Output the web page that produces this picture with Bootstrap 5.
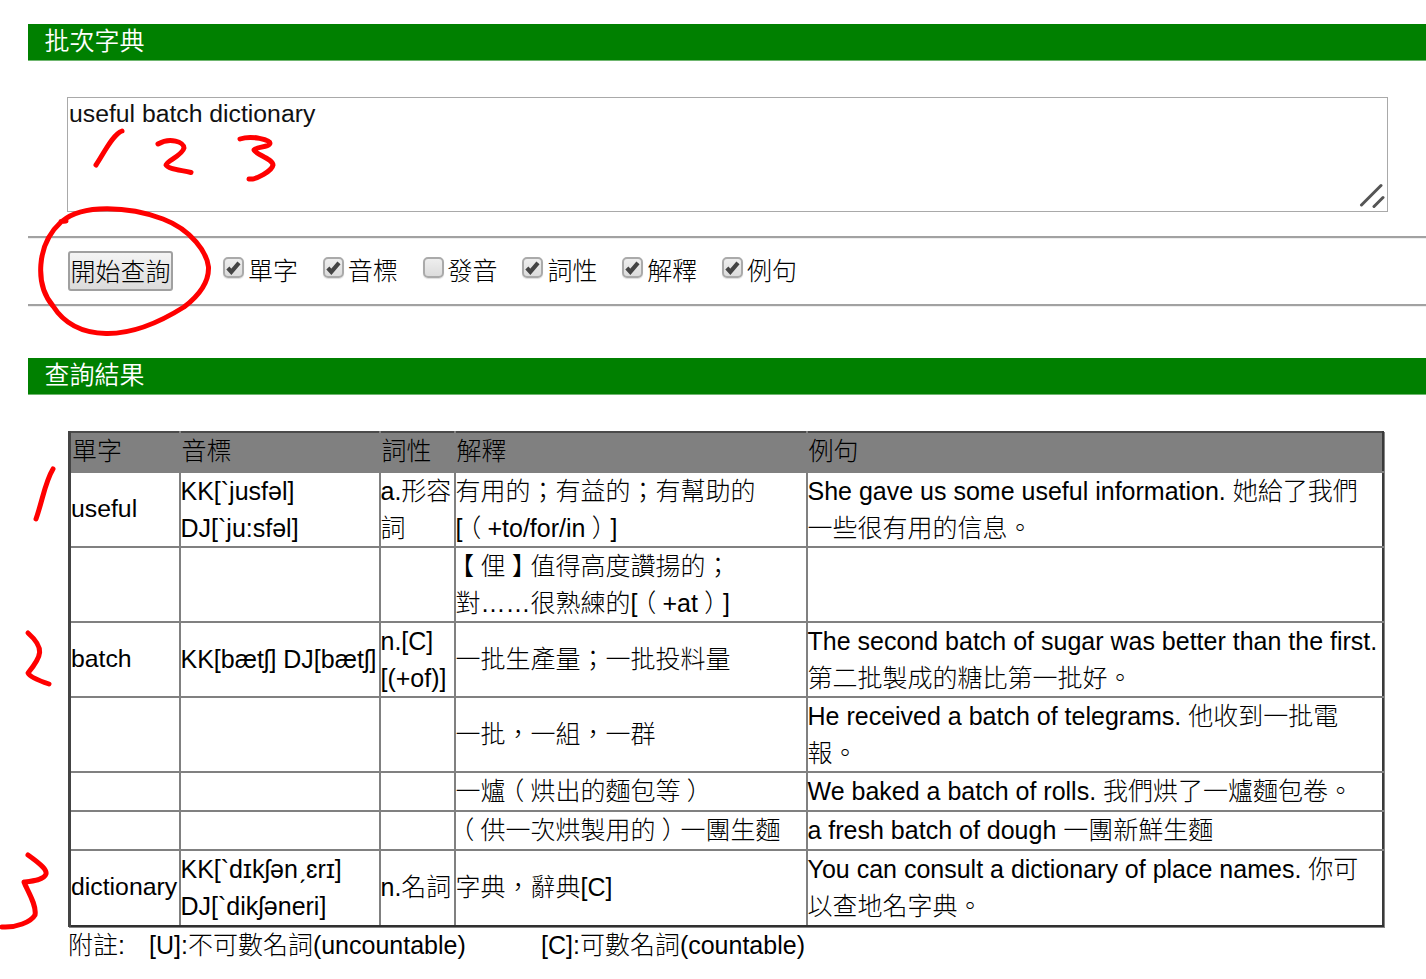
<!DOCTYPE html>
<html lang="zh-Hant">
<head>
<meta charset="utf-8">
<meta name="viewport" content="width=device-width, initial-scale=1">
<title>批次字典</title>
<link href="https://cdn.jsdelivr.net/npm/bootstrap@5.3.0/dist/css/bootstrap.min.css" rel="stylesheet">
<style>
  body { font: 300 25px/37px "Liberation Sans", "Noto Sans CJK TC", sans-serif; color: #000; background: #fff; overflow: hidden; }
  .page-wrap { padding: 24px 0 0 28px; min-height: 979px; }
  .title-bar { background: #008000; color: #fff; height: 36px; line-height: 34px; padding-left: 16.5px; font-size: 25px; font-weight: 350; margin: 0; box-shadow: 0 1px #6fb66f; }
  .query-area { margin: 37px 38px 24px 39px; height: 115px; border: 1px solid #a9a9a9; }
  .query-text { width: 100%; height: 100%; border: 0; padding: 1px 1px; resize: none; outline: 0; font: 24.75px/29px "Liberation Sans", sans-serif; color: #111; display: block; overflow: hidden; }
  .grip { right: 2px; bottom: 1px; }
  .tool-row { height: 70px; border-top: 2px solid #a2a2a2; border-bottom: 2px solid #a2a2a2; box-shadow: 0 1px #eee, inset 0 1px #eee; padding-left: 39.5px; }
  .query-btn { width: 105px; height: 40px; border: 2px solid #a0a0a0; border-radius: 3px; background: linear-gradient(#f4f4f4, #dcdcdc); padding: 0 0 0 1px; font: inherit; line-height: 38px; white-space: nowrap; color: #000; }
  .checks { margin-left: 50.5px; gap: 24.8px; }
  .check-item { gap: 4px; width: 75px; white-space: nowrap; }
  .check-item input { appearance: none; flex: none; width: 21px; height: 21px; margin: -8px 0 0; border: 2px solid #aaa; border-radius: 5px; background: linear-gradient(#eee, #dcdcdc); box-shadow: 0 1px 1px #ddd; }
  .check-item input:checked { background: url("data:image/svg+xml,%3Csvg xmlns='http://www.w3.org/2000/svg' viewBox='0 0 18 18'%3E%3Cpath d='M3 9.500l3.700 4L14.800 4' fill='none' stroke='%23444' stroke-width='4.400'/%3E%3C/svg%3E") center/17px no-repeat, linear-gradient(#eee, #dcdcdc); }
  .second-bar { margin-top: 52px; }
  .result-table { width: 1316px; margin: 37px 0 0 40px; table-layout: fixed; border-collapse: collapse; border: 2px solid #303030; border-left: 3px solid #444; box-shadow: 1px 1px #858585; white-space: nowrap; }
  .result-table td, .result-table th { border: 2px solid #808080; padding: 0; vertical-align: middle; font-weight: 300; font-size: 25px; line-height: 36.5px; }
  .result-table thead th { background: #808080; padding: 0 0 1px 1px; line-height: 35px; border-top-color: #4a4a4a; }
  .result-table tr > :last-child { border-right-color: #3a3a3a; }
  .result-table tr:last-child td { border-bottom-color: #303030; }
  .result-table td:first-child { font-size: 24.8px; }
  /* full-width brackets, centred in their cell */
  .fw { display: inline-block; width: 25px; text-align: center; font-feature-settings: "halt"; }
  .notes { margin: 0 0 0 40px; white-space: pre; }
  .ink { left: 0; top: 0; pointer-events: none; }
</style>
</head>
<body class="position-relative">
<main class="page-wrap">
  <h1 class="title-bar">批次字典</h1>
  <div class="query-area position-relative">
    <textarea class="query-text" spellcheck="false">useful batch dictionary</textarea>
    <svg class="grip position-absolute" width="26" height="28" viewBox="0 0 26 28" fill="none" stroke="#555" stroke-width="3" stroke-linecap="round"><path d="M2.500 23 22 3.500M15 24.500 24 15.500"/></svg>
  </div>
  <div class="tool-row d-flex align-items-center">
    <button class="query-btn" type="button">開始查詢</button>
    <div class="checks d-flex">
      <label class="check-item d-flex align-items-center"><input type="checkbox" checked>單字</label>
      <label class="check-item d-flex align-items-center"><input type="checkbox" checked>音標</label>
      <label class="check-item d-flex align-items-center"><input type="checkbox">發音</label>
      <label class="check-item d-flex align-items-center"><input type="checkbox" checked>詞性</label>
      <label class="check-item d-flex align-items-center"><input type="checkbox" checked>解釋</label>
      <label class="check-item d-flex align-items-center"><input type="checkbox" checked>例句</label>
    </div>
  </div>
  <h2 class="title-bar second-bar">查詢結果</h2>
  <table class="result-table">
    <colgroup><col style="width:110px"><col style="width:200px"><col style="width:75px"><col style="width:352px"><col></colgroup>
    <thead>
      <tr style="height:40px"><th>單字</th><th>音標</th><th>詞性</th><th>解釋</th><th>例句</th></tr>
    </thead>
    <tbody>
      <tr style="height:75px"><td>useful</td><td>KK[`jusfəl]<br>DJ[`ju:sfəl]</td><td>a.形容<br>詞</td><td>有用的；有益的；有幫助的<br>[<span class="fw">（</span>+to/for/in<span class="fw">）</span>]</td><td>She gave us some useful information. 她給了我們<br>一些很有用的信息。</td></tr>
      <tr style="height:75px"><td></td><td></td><td></td><td><span class="fw">【</span>俚<span class="fw">】</span>值得高度讚揚的；<br>對……很熟練的[<span class="fw">（</span>+at<span class="fw">）</span>]</td><td></td></tr>
      <tr style="height:75px"><td>batch</td><td>KK[bætʃ] DJ[bætʃ]</td><td>n.[C]<br>[(+of)]</td><td>一批生產量；一批投料量</td><td>The second batch of sugar was better than the first.<br>第二批製成的糖比第一批好。</td></tr>
      <tr style="height:75px"><td></td><td></td><td></td><td>一批，一組，一群</td><td>He received a batch of telegrams. 他收到一批電<br>報。</td></tr>
      <tr style="height:39px"><td></td><td></td><td></td><td>一爐<span class="fw">（</span>烘出的麵包等<span class="fw">）</span></td><td>We baked a batch of rolls. 我們烘了一爐麵包卷。</td></tr>
      <tr style="height:38px"><td></td><td></td><td></td><td><span class="fw">（</span>供一次烘製用的<span class="fw">）</span>一團生麵</td><td>a fresh batch of dough 一團新鮮生麵</td></tr>
      <tr style="height:76px"><td>dictionary</td><td>KK[`dɪkʃənˏɛrɪ]<br>DJ[`dikʃəneri]</td><td>n.名詞</td><td>字典，辭典[C]</td><td>You can consult a dictionary of place names. 你可<br>以查地名字典。</td></tr>
    </tbody>
  </table>
  <div class="notes d-flex"><span style="width:81px">附註:</span><span style="width:392px">[U]:不可數名詞(uncountable)</span><span>[C]:可數名詞(countable)</span></div>
</main>
<!-- red pen annotations over the page -->
<svg class="ink position-absolute" width="1426" height="979" viewBox="0 0 1426 979" fill="none" stroke="#f00" stroke-width="5" stroke-linecap="round" stroke-linejoin="round">
  <path d="M122 131C113 134 104 153 96 165"/>
  <path d="M158 144C170 137 184 142 184 148C182 156 166 161 166 165C168 169 181 170 191 172.500"/>
  <path d="M240 139C252 135 270 140 270 143C270 147 256 147 254 150C255 154 273 159 273 165C272 171 256 180 249 179"/>
  <path d="M61 221.500L66 221M62 221.500C82 204 128 206 163 219C192 230 207 253 208.500 267C209 281 201 294 184 307C157 324 132 334 106 333.500C83 333 65 325 53 306C35 285 36 245 61 222"/>
  <path d="M53 469C45 482 43 499 36 519"/>
  <path d="M28 633C45 648 42 656 28 673C30 677 40 681 49 684"/>
  <path d="M28 855C42 865 47 870 46 874C44 880 33 881 24 882C27 890 37 905 35 915C31 922 16 928 2 927"/>
</svg>
<script src="https://cdn.jsdelivr.net/npm/bootstrap@5.3.0/dist/js/bootstrap.bundle.min.js"></script>
</body>
</html>
